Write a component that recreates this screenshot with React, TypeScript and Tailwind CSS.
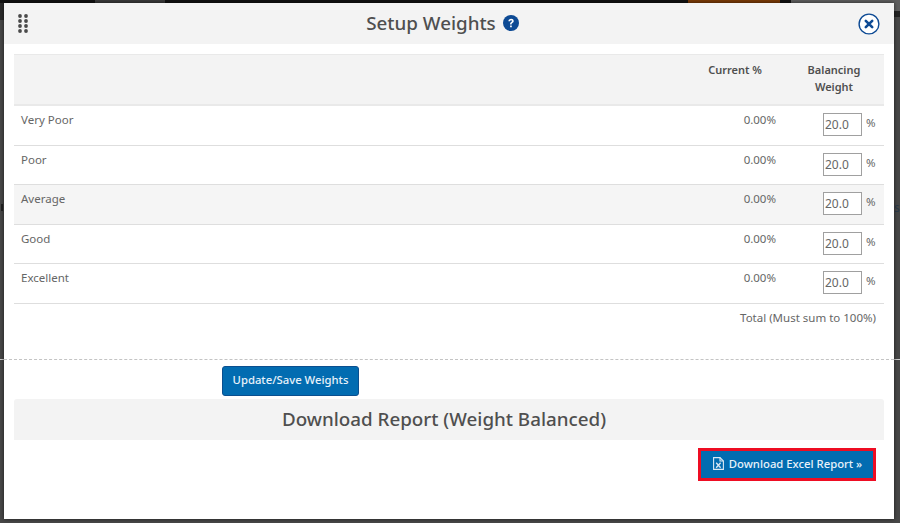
const FONT = "font-['Noto_Sans','Open_Sans',sans-serif]";

const rows = [
  { name: "Very Poor", alt: false },
  { name: "Poor", alt: false },
  { name: "Average", alt: true },
  { name: "Good", alt: false },
  { name: "Excellent", alt: false },
];

function GripIcon() {
  return (
    <svg width="10" height="20" viewBox="0 0 10 20" fill="#4a4a4a" aria-hidden="true">
      {[2, 7, 12, 17].map((cy) => (
        <g key={cy}>
          <circle cx="2" cy={cy} r="1.9" />
          <circle cx="8" cy={cy} r="1.9" />
        </g>
      ))}
    </svg>
  );
}

function HelpIcon() {
  return (
    <svg width="16" height="16" viewBox="0 0 16 16" aria-hidden="true">
      <circle cx="8" cy="8" r="8" fill="#0d4a94" />
      <path d="M5.4 6.2C5.5 4.7 6.6 3.8 8.1 3.8c1.5 0 2.6.9 2.6 2.2 0 1-.5 1.5-1.3 2-.6.4-.8.6-.8 1.2v.3H7.1v-.5c0-.9.4-1.4 1.1-1.9.5-.3.8-.6.8-1 0-.5-.4-.8-.9-.8-.6 0-1 .4-1.1 1z" fill="#fff" />
      <rect x="7.1" y="10.5" width="1.7" height="1.8" rx=".3" fill="#fff" />
    </svg>
  );
}

function CloseIcon() {
  return (
    <svg width="22" height="22" viewBox="0 0 22 22" aria-hidden="true">
      <circle cx="11" cy="11" r="9.9" fill="#fff" stroke="#0d4a94" strokeWidth="1.4" />
      <path d="M7.8 7.8l6.4 6.4M14.2 7.8l-6.4 6.4" stroke="#0d4a94" strokeWidth="2.6" strokeLinecap="round" />
    </svg>
  );
}

function ExcelIcon() {
  return (
    <svg width="11" height="13" viewBox="0 0 11 13" fill="none" aria-hidden="true">
      <path d="M.6.6h6.4l3.4 3.4v8.4H.6z" stroke="#dbe9f4" strokeWidth="1.1" />
      <path d="M7 .6V4h3.4" stroke="#dbe9f4" strokeWidth="1.1" />
      <path d="M3.2 5.8l4.4 5M7.6 5.8l-4.4 5" stroke="#dbe9f4" strokeWidth="1.3" />
    </svg>
  );
}

function Backdrop() {
  return (
    <div className="absolute inset-0 bg-[#474747]">
      <div className="absolute left-0 top-0 w-[791px] h-[3px] bg-[#111111]" />
      <div className="absolute left-[688px] top-0 w-[92px] h-[3px] bg-[#7a3a06]" />
      <div className="absolute left-[95px] top-0 w-[70px] h-[3px] bg-[#3a3a3a]" />
      <div className="absolute left-[791px] top-0 w-[109px] h-[11px] bg-[#5e5e5e]" />
      <div className="absolute left-[894px] top-[11px] w-[6px] h-[6px] bg-[#222222]" />
      <div className="absolute left-0 top-[3px] w-[4px] h-[17px] bg-[#2a2a2a]" />
      <div className="absolute left-0 top-[359px] w-[4px] h-px bg-[#d0d0d0]" />
      <div className="absolute left-[894px] top-[359px] w-[6px] h-px bg-[#d0d0d0]" />
      <div className="absolute left-[894px] top-[200px] text-[12px] leading-[16px] text-[#2a3a4a]">s</div>
      <div className="absolute left-[1px] top-[204px] w-[2px] h-[7px] bg-[#222222]" />
    </div>
  );
}

export default function App() {
  return (
    <div className={`${FONT} relative w-[900px] h-[523px] overflow-hidden pt-[3px] pl-[4px]`}>
      <Backdrop />
      <div className="relative w-[890px] h-[516px] bg-white shadow-[0_0_4px_rgba(0,0,0,0.6)] text-[#666666] flex flex-col">
        <div className="h-[41px] shrink-0 bg-[#f3f3f3] flex items-center px-[14px]">
          <div className="w-[20px] flex"><GripIcon /></div>
          <div className="flex-1 flex items-center justify-center gap-[7px] pr-[11px]">
            <span className="text-[18.8px] font-medium text-[#4f4f4f] leading-none">Setup Weights</span>
            <HelpIcon />
          </div>
          <CloseIcon />
        </div>

        <div className="mx-[10px] mt-[10px]">
          <div className="h-[52px] bg-[#f3f3f3] border-t border-b-2 border-[#e9e9e9] flex text-[11px] font-semibold text-[#4f4f4f] leading-[17px]">
            <div className="flex-1" />
            <div className="w-[96px] pt-[6px] text-right pr-[22px]">Current %</div>
            <div className="w-[100px] pt-[6px] pl-[10px] pr-[10px] text-center">Balancing<br />Weight</div>
          </div>
          {rows.map((r) => (
            <div
              key={r.name}
              className={`h-[39.5px] border-b border-[#dedede] flex text-[11.5px] ${r.alt ? "bg-[#f5f5f5]" : "bg-white"}`}
            >
              <div className="flex-1 pl-[7px] pt-[5px]">{r.name}</div>
              <div className="w-[64px] pt-[5px] text-right">0.00%</div>
              <div className="w-[108px] pl-[47px] pt-[7px] flex items-start">
                <div className="w-[39px] h-[23px] bg-white border border-[#a0a0a0] text-[12px] leading-[21px] pl-[1px] text-[#666666]">20.0</div>
                <span className="ml-[4px] pt-[1px]">%</span>
              </div>
            </div>
          ))}
          <div className="text-[11.5px] text-right pr-[8px] pt-[5px] leading-[17px]">Total (Must sum to 100%)</div>
        </div>

        <div className="mt-[33px] border-t border-dashed border-[#c4c4c4]" />

        <div className="pl-[218px] mt-[6px]">
          <button className="w-[137px] h-[30px] pb-[2px] rounded-[3px] bg-[#026cb1] border border-[#0b4f8f] text-[#e8f2fa] text-[11.3px] font-medium">
            Update/Save Weights
          </button>
        </div>

        <div className="mx-[10px] mt-[3px] h-[41px] shrink-0 bg-[#f3f3f3] rounded-t-[3px] flex items-center justify-center pr-[10px] text-[18.8px] font-medium text-[#4f4f4f]">
          Download Report (Weight Balanced)
        </div>

        <div className="flex justify-end pr-[18px] mt-[8px]">
          <button className="w-[178px] h-[33px] pb-[1px] pl-[1px] bg-[#026cb1] border-[3px] border-[#ee0d23] text-[#e8f2fa] text-[11.3px] font-medium flex items-center justify-center gap-[5px]">
            <ExcelIcon />
            <span>Download Excel Report »</span>
          </button>
        </div>
      </div>
    </div>
  );
}
